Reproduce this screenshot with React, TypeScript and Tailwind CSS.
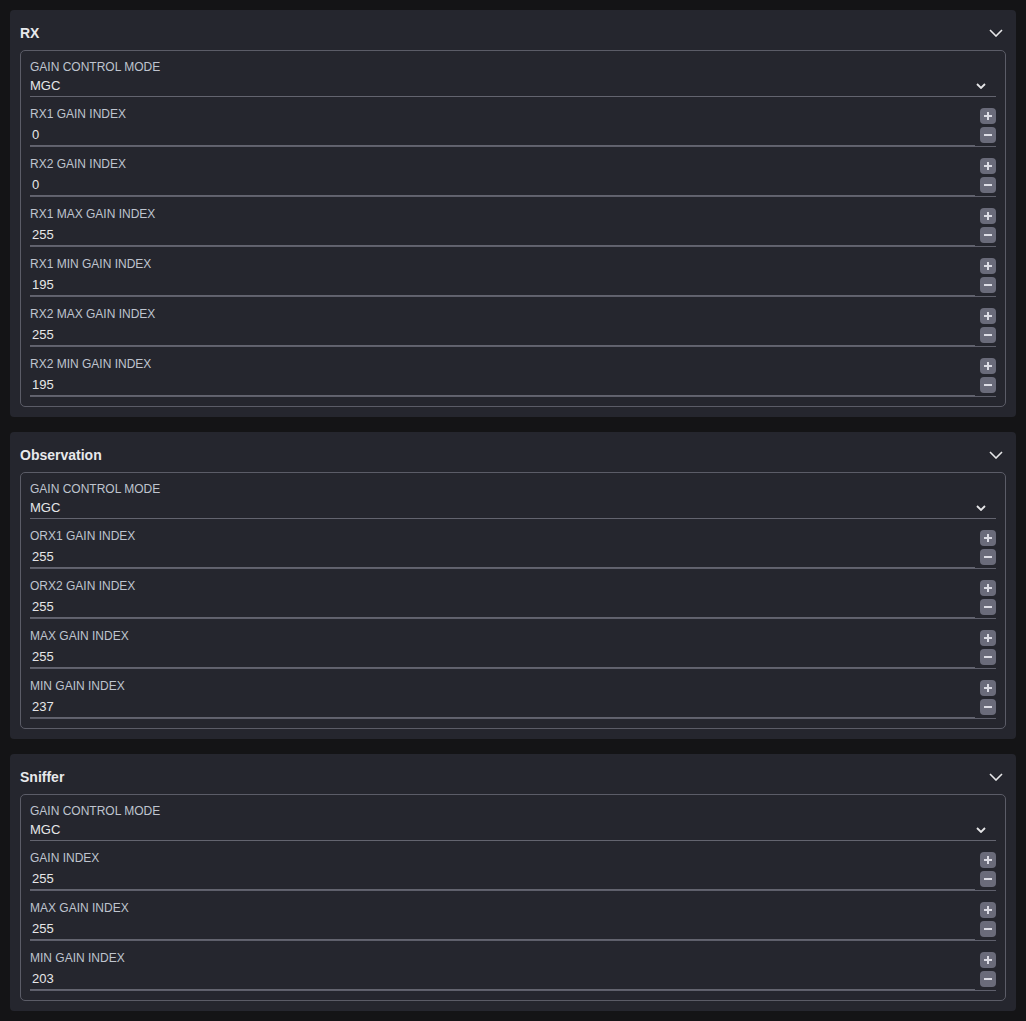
import React from 'react';

type Section = {
  title: string;
  mode: string;
  fields: { label: string; value: string }[];
};

const sections: Section[] = [
  {
    title: 'RX',
    mode: 'MGC',
    fields: [
      { label: 'RX1 GAIN INDEX', value: '0' },
      { label: 'RX2 GAIN INDEX', value: '0' },
      { label: 'RX1 MAX GAIN INDEX', value: '255' },
      { label: 'RX1 MIN GAIN INDEX', value: '195' },
      { label: 'RX2 MAX GAIN INDEX', value: '255' },
      { label: 'RX2 MIN GAIN INDEX', value: '195' },
    ],
  },
  {
    title: 'Observation',
    mode: 'MGC',
    fields: [
      { label: 'ORX1 GAIN INDEX', value: '255' },
      { label: 'ORX2 GAIN INDEX', value: '255' },
      { label: 'MAX GAIN INDEX', value: '255' },
      { label: 'MIN GAIN INDEX', value: '237' },
    ],
  },
  {
    title: 'Sniffer',
    mode: 'MGC',
    fields: [
      { label: 'GAIN INDEX', value: '255' },
      { label: 'MAX GAIN INDEX', value: '255' },
      { label: 'MIN GAIN INDEX', value: '203' },
    ],
  },
];

// --- Step buttons ---
function StepButton({ kind }: { kind: 'plus' | 'minus' }) {
  return (
    <button className="w-4 h-4 rounded-[4px] bg-[#6a6b7a] flex items-center justify-center">
      <svg width="10" height="10" viewBox="0 0 10 10">
        <rect x="1" y="4" width="8" height="2" fill="#dcdce4" />
        {kind === 'plus' && <rect x="4" y="1" width="2" height="8" fill="#dcdce4" />}
      </svg>
    </button>
  );
}

function SelectRow({ value }: { value: string }) {
  return (
    <div className="flex flex-col">
      <span className="h-[18px] leading-[18px] text-[12px] text-[#bfc4ce]">GAIN CONTROL MODE</span>
      <div className="h-[21px] flex items-center justify-between border-b border-[#63646f]">
        <span className="text-[13px] text-[#e6e6e8]">{value}</span>
        <svg width="10" height="6" viewBox="0 0 10 6" className="mr-[10px]">
          <polyline points="1,1 5,5 9,1" fill="none" stroke="#e6e6e8" strokeWidth="1.8" />
        </svg>
      </div>
    </div>
  );
}

function NumberRow({ label, value }: { label: string; value: string }) {
  return (
    <div className="flex items-end border-b border-[#5e5f6b]">
      <div className="flex-1 flex flex-col">
        <span className="h-[18px] leading-[18px] text-[12px] text-[#bfc4ce]">{label}</span>
        <div className="h-[23px] flex items-center pt-[2px] pl-[2px] border-b border-[#63646f]">
          <span className="text-[13px] text-[#e6e6e8]">{value}</span>
        </div>
      </div>
      <div className="w-4 ml-[5px] mb-[3px] flex flex-col gap-[3px]">
        <StepButton kind="plus" />
        <StepButton kind="minus" />
      </div>
    </div>
  );
}

function Card({ section }: { section: Section }) {
  return (
    <div className="rounded-[4px] bg-[#25262e] px-[10px] pb-[10px]">
      <div className="h-10 pt-[6px] flex items-center justify-between">
        <span className="text-[14px] font-bold text-[#e8e9ec]">{section.title}</span>
        <svg width="14" height="8" viewBox="0 0 14 8" className="mr-[3px]">
          <polyline points="1,1 7,7 13,1" fill="none" stroke="#e6e6e8" strokeWidth="1.6" />
        </svg>
      </div>
      <div className="rounded-[5px] border border-[#5b5c67] px-[9px] pt-[7px] pb-[9px] flex flex-col gap-2">
        <SelectRow value={section.mode} />
        {section.fields.map((f) => (
          <NumberRow key={f.label} label={f.label} value={f.value} />
        ))}
      </div>
    </div>
  );
}

export default function App() {
  return (
    <div
      className="min-h-[1021px] bg-[#141416] p-[10px] flex flex-col gap-[15px]"
      style={{ fontFamily: '"Liberation Sans", Arial, sans-serif' }}
    >
      {sections.map((s) => (
        <Card key={s.title} section={s} />
      ))}
    </div>
  );
}
